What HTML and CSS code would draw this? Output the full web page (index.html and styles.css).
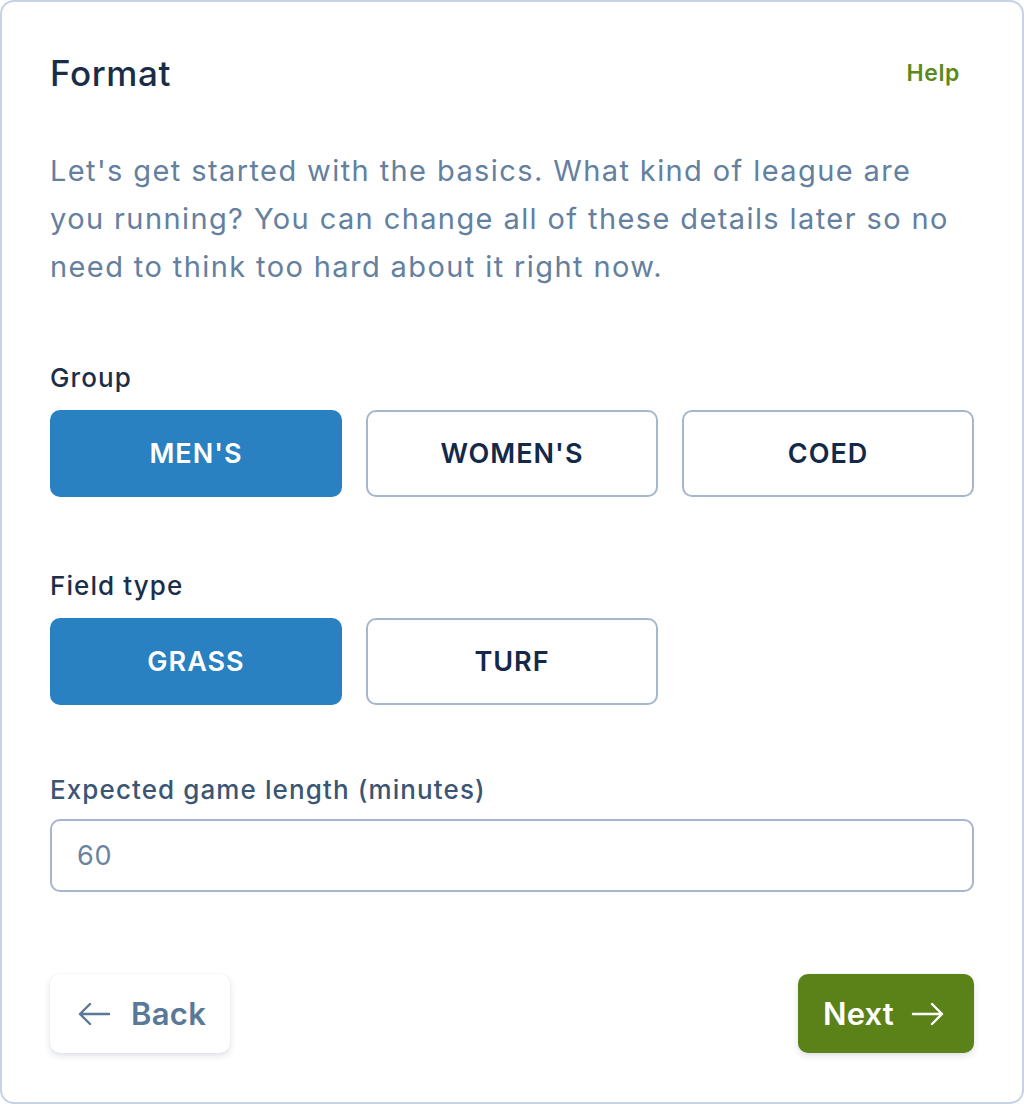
FILE: index.html
```html
<!DOCTYPE html>
<html lang="en">
<head>
<meta charset="utf-8">
<title>Format</title>
<link rel="stylesheet" href="styles.css">
</head>
<body>
<div class="card">
  <div class="header">
    <h1 class="title">Format</h1>
    <a class="help" href="#">Help</a>
  </div>
  <p class="intro">Let's get started with the basics. What kind of league are you running? You can change all of these details later so no need to think too hard about it right now.</p>

  <div class="section section-group">
    <div class="label">Group</div>
    <div class="options">
      <button class="option selected">MEN'S</button>
      <button class="option">WOMEN'S</button>
      <button class="option">COED</button>
    </div>
  </div>

  <div class="section section-field">
    <div class="label">Field type</div>
    <div class="options">
      <button class="option selected">GRASS</button>
      <button class="option">TURF</button>
    </div>
  </div>

  <div class="section section-length">
    <label class="label label-input" for="len">Expected game length (minutes)</label>
    <input id="len" class="text-input" type="text" placeholder="60">
  </div>

  <div class="footer">
    <button class="nav back">
      <svg class="arrow" width="34" height="24" viewBox="0 0 34 24" fill="none" stroke="currentColor" stroke-width="2.4" stroke-linecap="round" stroke-linejoin="round"><path d="M32 12H3M13 2L3 12l10 10"/></svg>
      <span>Back</span>
    </button>
    <button class="nav next">
      <span>Next</span>
      <svg class="arrow" width="34" height="24" viewBox="0 0 34 24" fill="none" stroke="currentColor" stroke-width="2.4" stroke-linecap="round" stroke-linejoin="round"><path d="M2 12h29M21 2l10 10-10 10"/></svg>
    </button>
  </div>
</div>
</body>
</html>
```

FILE: styles.css
```css
* { box-sizing: border-box; }
html, body { margin: 0; padding: 0; background: #ffffff; }
body { font-family: Inter, "Noto Sans", sans-serif; }

.card {
  width: 1024px;
  height: 1104px;
  border: 2px solid #c6d3e5;
  border-radius: 14px;
  background: #fff;
  padding: 51px 48px 0 48px;
}

.header {
  display: flex;
  justify-content: space-between;
  align-items: center;
  height: 40px;
}
.title {
  margin: 0;
  font-size: 35px;
  font-weight: 500;
  color: #192c48;
  line-height: 40px;
  letter-spacing: 0.6px;
}
.help {
  font-size: 23px;
  font-weight: 600;
  color: #5b8a1b;
  text-decoration: none;
  margin-right: 14px;
  letter-spacing: 0.6px;
}

.intro {
  width: 915px;
  margin: 54px 0 0 0;
  font-size: 29px;
  line-height: 48px;
  color: #64809f;
  letter-spacing: 1.4px;
}

.section-group { margin-top: 71px; }
.section-field { margin-top: 73px; }
.section-length { margin-top: 69px; }

.label {
  display: block;
  font-size: 26px;
  line-height: 32px;
  color: #1b2e4a;
  font-weight: 500;
  letter-spacing: 1.1px;
}
.label-input { color: #3b5674; }

.options {
  display: grid;
  grid-template-columns: repeat(3, 292px);
  gap: 24px;
  margin-top: 16px;
}
.option {
  height: 87px;
  border: 2px solid #a5b7cd;
  background: #fff;
  border-radius: 10px;
  font-family: Inter, "Noto Sans", sans-serif;
  font-size: 27px;
  font-weight: 600;
  color: #13294a;
  letter-spacing: 1px;
}
.option.selected {
  background: #2a81c1;
  border-color: #2a81c1;
  color: #fff;
}

.text-input {
  display: block;
  width: 924px;
  height: 73px;
  margin-top: 13px;
  border: 2px solid #a5b7cd;
  border-radius: 10px;
  padding: 0 25px;
  font-family: Inter, "Noto Sans", sans-serif;
  font-size: 27px;
  letter-spacing: 0.8px;
  color: #1b2e4a;
}
.text-input::placeholder { color: #6a83a0; }

.footer {
  display: flex;
  justify-content: space-between;
  margin-top: 82px;
}
.nav {
  height: 79px;
  border: none;
  border-radius: 10px;
  display: flex;
  align-items: center;
  gap: 20px;
  font-family: Inter, "Noto Sans", sans-serif;
  font-size: 31px;
  font-weight: 600;
  letter-spacing: 0.3px;
  box-shadow: 0 3px 6px rgba(30, 50, 80, 0.14), 0 0 2px rgba(30, 50, 80, 0.06);
}
.back {
  width: 180px;
  padding: 0 0 0 27px;
  background: #fff;
  color: #5a7897;
}
.next {
  width: 176px;
  padding: 0 0 0 25px;
  gap: 17px;
  background: #5b8219;
  color: #fff;
  letter-spacing: 0.1px;
}
.arrow { flex: none; }
```
